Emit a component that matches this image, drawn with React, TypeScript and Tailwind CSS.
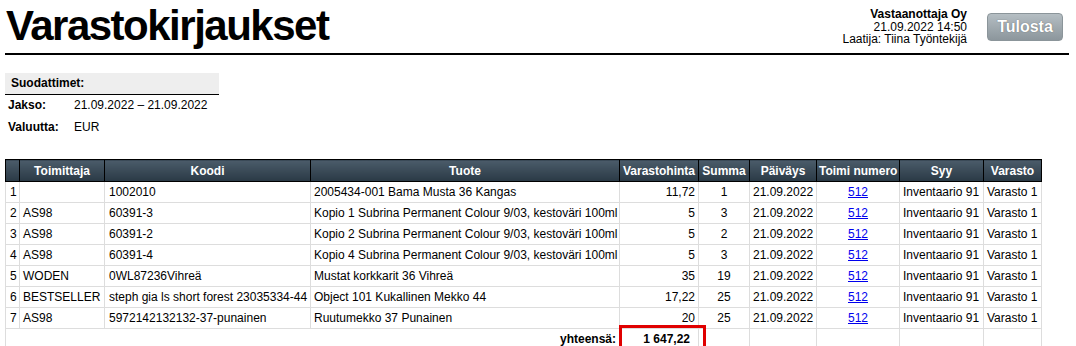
import React from 'react';

const rows = [
  { n: 1, toimittaja: '', koodi: '1002010', tuote: '2005434-001 Bama Musta 36 Kangas', hinta: '11,72', summa: '1' },
  { n: 2, toimittaja: 'AS98', koodi: '60391-3', tuote: 'Kopio 1 Subrina Permanent Colour 9/03, kestoväri 100ml', hinta: '5', summa: '3' },
  { n: 3, toimittaja: 'AS98', koodi: '60391-2', tuote: 'Kopio 2 Subrina Permanent Colour 9/03, kestoväri 100ml', hinta: '5', summa: '2' },
  { n: 4, toimittaja: 'AS98', koodi: '60391-4', tuote: 'Kopio 4 Subrina Permanent Colour 9/03, kestoväri 100ml', hinta: '5', summa: '3' },
  { n: 5, toimittaja: 'WODEN', koodi: '0WL87236Vihreä', tuote: 'Mustat korkkarit 36 Vihreä', hinta: '35', summa: '19' },
  { n: 6, toimittaja: 'BESTSELLER', koodi: 'steph gia ls short forest 23035334-44', tuote: 'Object 101 Kukallinen Mekko 44', hinta: '17,22', summa: '25' },
  { n: 7, toimittaja: 'AS98', koodi: '5972142132132-37-punainen', tuote: 'Ruutumekko 37 Punainen', hinta: '20', summa: '25' },
];

const headers = ['', 'Toimittaja', 'Koodi', 'Tuote', 'Varastohinta', 'Summa', 'Päiväys', 'Toimi numero', 'Syy', 'Varasto'];
const widths = [14, 85, 206, 309, 79, 51, 67, 83, 84, 58];

export default function App() {
  return (
    <div className="bg-white text-black text-[12px] pl-[5px] pr-[7px]" style={{ fontFamily: '"Liberation Sans", Arial, sans-serif' }}>
      {/* page header */}
      <div className="flex items-start justify-between border-b-2 border-black h-[55px]">
        <h1 className="text-[42px] font-bold tracking-[-1.5px] leading-none pt-[5px] pl-[1px]">Varastokirjaukset</h1>
        <div className="flex items-start pt-[8px]">
          <div className="text-right leading-[12.5px] mr-[20px]">
            <div className="font-bold">Vastaanottaja Oy</div>
            <div>21.09.2022 14:50</div>
            <div>Laatija: Tiina Työntekijä</div>
          </div>
          <button className="mt-[5px] w-[76px] h-[28px] rounded-[4px] border border-[#8b959a] bg-gradient-to-b from-[#b5bec3] to-[#8c969c] text-white font-bold text-[16px] [text-shadow:0_0_1px_#555] mr-[6px]">
            Tulosta
          </button>
        </div>
      </div>

      {/* filters */}
      <table className="mt-[18px] w-[214px] border-collapse">
        <tbody>
          <tr className="h-[21px]">
            <td colSpan={2} className="bg-[#eeeeee] border-b border-black font-bold pl-[6px]">Suodattimet:</td>
          </tr>
          <tr className="h-[22px]">
            <td className="font-bold w-[69px] pl-[3px]">Jakso:</td>
            <td>21.09.2022 – 21.09.2022</td>
          </tr>
          <tr className="h-[22px]">
            <td className="font-bold pl-[3px]">Valuutta:</td>
            <td>EUR</td>
          </tr>
        </tbody>
      </table>

      {/* main table */}
      <table className="mt-[21px] w-[1036px] table-fixed border-collapse">
        <colgroup>
          {widths.map((w, i) => (
            <col key={i} style={{ width: w }} />
          ))}
        </colgroup>
        <thead>
          <tr className="h-[22px]">
            {headers.map((h, i) => (
              <th key={i} className="border border-black bg-gradient-to-b from-[#4b5c6a] to-[#2a3945] text-white font-bold text-center px-[2px] whitespace-nowrap">
                {h}
              </th>
            ))}
          </tr>
        </thead>
        <tbody>
          {rows.map((r) => (
            <tr key={r.n} className="h-[21px]">
              <td className="border border-[#dddddd] px-[4px]">{r.n}</td>
              <td className="border border-[#dddddd] px-[3px] whitespace-nowrap">{r.toimittaja}</td>
              <td className="border border-[#dddddd] px-[4px] whitespace-nowrap">{r.koodi}</td>
              <td className="border border-[#dddddd] px-[3px] whitespace-nowrap">{r.tuote}</td>
              <td className="border border-[#dddddd] px-[3px] text-right">{r.hinta}</td>
              <td className="border border-[#dddddd] px-[3px] text-center">{r.summa}</td>
              <td className="border border-[#dddddd] px-[3px] text-center">21.09.2022</td>
              <td className="border border-[#dddddd] px-[3px] text-center">
                <a href="#" className="text-[#0000ee] underline">512</a>
              </td>
              <td className="border border-[#dddddd] px-[3px] whitespace-nowrap">Inventaario 91</td>
              <td className="border border-[#dddddd] px-[3px] whitespace-nowrap">Varasto 1</td>
            </tr>
          ))}
          <tr className="h-[21px]">
            <td colSpan={4} className="border border-[#dddddd] text-right font-bold pr-[3px]">yhteensä:</td>
            <td className="border border-[#dddddd] relative text-right font-bold pr-[8px]">
              <div className="absolute left-[-1px] top-[-4px] w-[87px] h-[26px] border-[3px] border-[#e00000]" />
              1 647,22
            </td>
            <td className="border border-[#dddddd]" />
            <td className="border border-[#dddddd]" />
            <td className="border border-[#dddddd]" />
            <td className="border border-[#dddddd]" />
            <td className="border border-[#dddddd]" />
          </tr>
        </tbody>
      </table>
    </div>
  );
}
